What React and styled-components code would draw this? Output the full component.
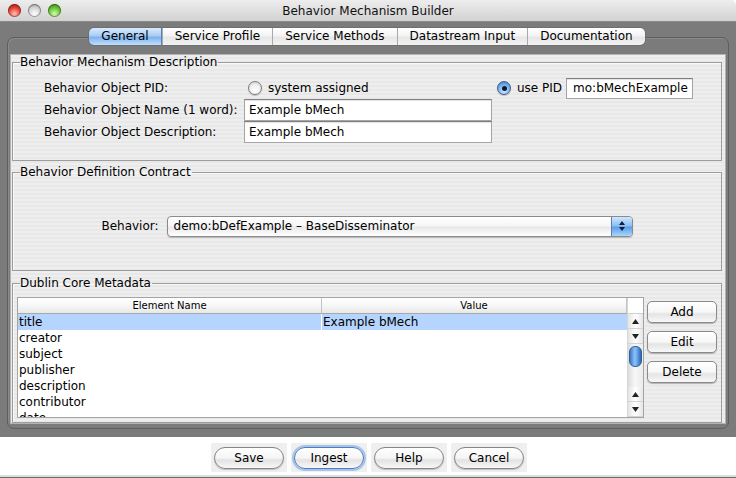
import React from 'react';
import styled, { createGlobalStyle, css } from 'styled-components';

const GlobalStyle = createGlobalStyle`
  html, body { margin: 0; padding: 0; background: #fff; }
  body {
    font-family: "DejaVu Sans", "Liberation Sans", sans-serif;
    font-size: 12px;
    color: #000;
  }
  * { box-sizing: border-box; }
`;

const Window = styled.div`
  width: 736px;
  height: 478px;
  display: flex;
  flex-direction: column;
  overflow: hidden;
`;

const TitleBar = styled.div`
  height: 22px;
  flex: none;
  display: grid;
  grid-template-columns: 1fr auto 1fr;
  align-items: center;
  background: linear-gradient(#ededed, #d2d2d2);
  border-bottom: 1px solid #8a8a8a;
  border-top-right-radius: 5px;
`;

const Lights = styled.div`
  display: flex;
  gap: 7px;
  padding-left: 8px;
  margin-top: -1px;
`;

const lightColors = {
  red: ['#ffc2b8', '#e3392c', '#8f1a10'],
  grey: ['#ffffff', '#d0d0d0', '#8e8e8e'],
  green: ['#d8fbb0', '#5fbe2f', '#2f7214'],
};

const Light = styled.span`
  width: 13px;
  height: 13px;
  border-radius: 50%;
  background: ${p => {
    const [a, b, c] = lightColors[p.$color];
    return `radial-gradient(circle at 50% 75%, ${a} 0%, ${b} 55%, ${c} 100%)`;
  }};
  box-shadow: inset 0 0 0 1px rgba(0, 0, 0, 0.35);
`;

const Title = styled.div`
  font-size: 12px;
  color: #111;
`;

const Body = styled.div`
  height: 415px;
  flex: none;
  background: #7b7b7b;
  padding: 5px 7px 8px 7px;
  display: flex;
  flex-direction: column;
`;

const TabStrip = styled.div`
  align-self: center;
  display: flex;
  height: 19px;
  border: 1px solid #6f6f6f;
  border-radius: 6px;
  overflow: hidden;
  position: relative;
  z-index: 1;
  margin-left: -2px;
`;

const Tab = styled.div`
  padding: 0 12px;
  line-height: 17px;
  font-size: 12px;
  white-space: nowrap;
  border-left: 1px solid #a9a9a9;
  background: linear-gradient(#ffffff 0%, #f4f4f4 45%, #e6e6e6 55%, #f3f3f3 100%);
  &:first-child { border-left: none; }
  ${p => p.$active && css`
    background: linear-gradient(#d9ebfd 0%, #a8cdf5 45%, #7fb2ee 55%, #bfe0fd 100%);
    border-right: 1px solid #5b7fb3;
  `}
`;

const Pane = styled.div`
  flex: 1;
  margin-top: -9px;
  border: 1px solid #5e5e5e;
  border-radius: 7px;
  box-shadow: inset 1px 1px 0 #8a8a8a;
  padding: 16px 2px 4px 2px;
  display: flex;
`;

const Panel = styled.div`
  flex: 1;
  border: 1px solid #b3b3b3;
  background: repeating-linear-gradient(#eeeeee 0 2px, #e8e8e8 2px 4px);
  padding: 0 3px 0 1px;
  display: flex;
  flex-direction: column;
  gap: 4px;
`;

const Group = styled.fieldset`
  margin: 0;
  padding: 0;
  min-width: 0;
  border: 1px solid #9c9c9c;
  box-shadow: inset 1px 1px 0 #fafafa;
  height: ${p => (p.$height ? `${p.$height}px` : 'auto')};
  flex: ${p => (p.$height ? 'none' : '1')};
  margin-top: ${p => p.$gap || 0}px;
`;

const Legend = styled.legend`
  padding: 0 1px 0 0;
  margin-left: 7px;
  font-size: 12px;
  line-height: 14px;
`;

const DescGrid = styled.div`
  display: grid;
  grid-template-columns: 200px 1fr;
  grid-auto-rows: 22px;
  align-items: center;
  padding: 8px 0 0 31px;
`;

const Label = styled.div`
  white-space: nowrap;
`;

const PidRow = styled.div`
  display: flex;
  align-items: center;
  padding-left: 4px;
`;

const RadioOption = styled.label`
  display: flex;
  align-items: center;
  gap: 6px;
  width: ${p => (p.$width ? `${p.$width}px` : 'auto')};
  white-space: nowrap;
`;

const Radio = styled.span`
  width: 14px;
  height: 14px;
  border-radius: 50%;
  flex: none;
  border: 1px solid #7d7d7d;
  background: radial-gradient(circle at 50% 70%, #ffffff 0%, #f0f0f0 50%, #c9c9c9 100%);
  box-shadow: 0 1px 1px rgba(0, 0, 0, 0.2);
  display: flex;
  align-items: center;
  justify-content: center;
  ${p => p.$checked && css`
    border-color: #3f5f8f;
    background: radial-gradient(circle at 50% 75%, #d4ecff 0%, #7db6ef 50%, #3a75c4 100%);
    &::after {
      content: '';
      width: 5px;
      height: 5px;
      border-radius: 50%;
      background: #0c1b33;
    }
  `}
`;

const Field = styled.div`
  height: ${p => p.$h || 22}px;
  width: ${p => p.$w}px;
  margin-left: ${p => p.$ml || 0}px;
  border: 1px solid #a5a5a5;
  border-top-color: #7f7f7f;
  background: #fff;
  box-shadow: inset 0 1px 1px rgba(0, 0, 0, 0.12);
  display: flex;
  align-items: center;
  padding: 0 3px 0 ${p => p.$pl || 4}px;
  overflow: hidden;
  white-space: nowrap;
`;

const ContractRow = styled.div`
  height: 91px;
  display: flex;
  align-items: center;
  justify-content: center;
  gap: 8px;
  padding-top: 3px;
`;

const Select = styled.div`
  width: 466px;
  height: 21px;
  border: 1px solid #8b8b8b;
  border-radius: 4px;
  background: linear-gradient(#ffffff 0%, #f6f6f6 45%, #e9e9e9 55%, #ffffff 100%);
  box-shadow: 0 1px 1px rgba(0, 0, 0, 0.2);
  display: flex;
  align-items: center;
  overflow: hidden;
`;

const SelectText = styled.div`
  flex: 1;
  padding-left: 6px;
`;

const Stepper = styled.div`
  width: 21px;
  align-self: stretch;
  border-left: 1px solid #5a7fb3;
  background: linear-gradient(#cfe6fd 0%, #8ec0f3 45%, #5f9fe9 55%, #a9d6fd 100%);
  display: flex;
  flex-direction: column;
  align-items: center;
  justify-content: center;
  gap: 2px;
`;

const MetaRow = styled.div`
  display: flex;
  padding: 7px 4px 0 4px;
  gap: 3px;
`;

const Table = styled.div`
  width: 627px;
  height: 121px;
  border: 1px solid #a4a4a4;
  background: #fff;
  display: flex;
  overflow: hidden;
`;

const TableMain = styled.div`
  flex: 1;
  overflow: hidden;
`;

const HeaderRow = styled.div`
  display: grid;
  grid-template-columns: 304px 1fr;
  height: 16px;
  border-bottom: 1px solid #a9a9a9;
  background: linear-gradient(#ffffff 0%, #f7f7f7 50%, #e8e8e8 100%);
`;

const HeaderCell = styled.div`
  font-size: 10px;
  line-height: 15px;
  text-align: center;
  border-right: 1px solid #c3c3c3;
`;

const Row = styled.div`
  display: grid;
  grid-template-columns: 304px 1fr;
  height: 16px;
`;

const Cell = styled.div`
  line-height: 16px;
  padding-left: 1px;
  white-space: nowrap;
  background: ${p => (p.$selected ? '#b5d5ff' : '#fff')};
  &:first-child { border-right: 1px solid #fff; }
`;

const ScrollColumn = styled.div`
  width: 16px;
  display: flex;
  flex-direction: column;
  border-left: 1px solid #d6d6d6;
`;

const Corner = styled.div`
  height: 16px;
  border-bottom: 1px solid #d0d0d0;
  background: #fff;
`;

const ArrowBox = styled.div`
  height: 15px;
  display: flex;
  align-items: center;
  justify-content: center;
  background: linear-gradient(90deg, #e4e4e4, #ffffff 50%, #e6e6e6);
  border-bottom: 1px solid #d3d3d3;
`;

const Track = styled.div`
  flex: 1;
  background: linear-gradient(90deg, #dcdcdc, #f7f7f7 45%, #ececec);
  padding: 2px 1px 0 1px;
`;

const Thumb = styled.div`
  height: 21px;
  border-radius: 6px;
  border: 1px solid #345d99;
  background: linear-gradient(90deg, #3d79cc 0%, #8fc3f6 45%, #5d9ce8 70%, #2f64b4 100%);
`;

const SideButtons = styled.div`
  display: flex;
  flex-direction: column;
  gap: 8px;
  padding-top: 4px;
`;

const SquareButton = styled.div`
  width: 70px;
  height: 22px;
  border: 1px solid #8a8a8a;
  border-radius: 5px;
  background: linear-gradient(#ffffff 0%, #f7f7f7 50%, #e4e4e4 60%, #f8f8f8 100%);
  box-shadow: 0 1px 1px rgba(0, 0, 0, 0.25);
  display: flex;
  align-items: center;
  justify-content: center;
`;

const Footer = styled.div`
  flex: 1;
  background: #fff;
  display: flex;
  justify-content: center;
  gap: 4px;
  padding-top: 6px;
  box-shadow: inset 0 -1px 0 #6b6b6b, inset 0 -3px 0 #dcdcdc;
  padding-left: 2px;
`;

const ButtonSlot = styled.div`
  width: 76px;
  height: 29px;
  background: #efefef;
  display: flex;
  align-items: center;
  justify-content: center;
`;

const PillButton = styled.div`
  width: 70px;
  height: 22px;
  border: 1px solid #858585;
  border-radius: 11px;
  background: linear-gradient(#ffffff 0%, #f5f5f5 50%, #e2e2e2 60%, #f8f8f8 100%);
  box-shadow: 0 1px 1px rgba(0, 0, 0, 0.2);
  display: flex;
  align-items: center;
  justify-content: center;
  ${p => p.$focused && css`
    border-color: #4a7cc0;
    box-shadow: 0 0 0 2px rgba(108, 160, 226, 0.55);
  `}
`;

function Triangle({ up, color = '#222', w = 7, h = 5 }) {
  return (
    <svg width={w} height={h} viewBox={`0 0 ${w} ${h}`}>
      <polygon
        points={up ? `0,${h} ${w / 2},0 ${w},${h}` : `0,0 ${w},0 ${w / 2},${h}`}
        fill={color}
      />
    </svg>
  );
}

const tabs = ['General', 'Service Profile', 'Service Methods', 'Datastream Input', 'Documentation'];

const metadata = [
  { name: 'title', value: 'Example bMech' },
  { name: 'creator', value: '' },
  { name: 'subject', value: '' },
  { name: 'publisher', value: '' },
  { name: 'description', value: '' },
  { name: 'contributor', value: '' },
  { name: 'date', value: '' },
];

export default function App() {
  return (
    <Window>
      <GlobalStyle />
      <TitleBar>
        <Lights>
          <Light $color="red" />
          <Light $color="grey" />
          <Light $color="green" />
        </Lights>
        <Title>Behavior Mechanism Builder</Title>
        <div />
      </TitleBar>

      <Body>
        <TabStrip>
          {tabs.map((t, i) => (
            <Tab key={t} $active={i === 0}>{t}</Tab>
          ))}
        </TabStrip>
        <Pane>
          <Panel>
            <Group $height={106}>
              <Legend>Behavior Mechanism Description</Legend>
              <DescGrid>
                <Label>Behavior Object PID:</Label>
                <PidRow>
                  <RadioOption $width={249}>
                    <Radio />
                    system assigned
                  </RadioOption>
                  <RadioOption>
                    <Radio $checked />
                    use PID
                  </RadioOption>
                  {/* field is scrolled: only the tail of the PID shows */}
                  <Field $w={127} $h={21} $ml={4} $pl={6}>mo:bMechExample</Field>
                </PidRow>
                <Label>Behavior Object Name (1 word):</Label>
                <Field $w={248}>Example bMech</Field>
                <Label>Behavior Object Description:</Label>
                <Field $w={248}>Example bMech</Field>
              </DescGrid>
            </Group>

            <Group $height={106}>
              <Legend>Behavior Definition Contract</Legend>
              <ContractRow>
                <Label>Behavior:</Label>
                <Select>
                  <SelectText>demo:bDefExample – BaseDisseminator</SelectText>
                  <Stepper>
                    <Triangle up color="#0d1f3c" w={6} h={4} />
                    <Triangle color="#0d1f3c" w={6} h={4} />
                  </Stepper>
                </Select>
              </ContractRow>
            </Group>

            <Group $gap={1}>
              <Legend>Dublin Core Metadata</Legend>
              <MetaRow>
                <Table>
                  <TableMain>
                    <HeaderRow>
                      <HeaderCell>Element Name</HeaderCell>
                      <HeaderCell>Value</HeaderCell>
                    </HeaderRow>
                    {metadata.map((m, i) => (
                      <Row key={m.name}>
                        <Cell $selected={i === 0}>{m.name}</Cell>
                        <Cell $selected={i === 0}>{m.value}</Cell>
                      </Row>
                    ))}
                  </TableMain>
                  <ScrollColumn>
                    <Corner />
                    <ArrowBox><Triangle up /></ArrowBox>
                    <ArrowBox><Triangle /></ArrowBox>
                    <Track><Thumb /></Track>
                    <ArrowBox><Triangle up /></ArrowBox>
                    <ArrowBox><Triangle /></ArrowBox>
                  </ScrollColumn>
                </Table>
                <SideButtons>
                  <SquareButton>Add</SquareButton>
                  <SquareButton>Edit</SquareButton>
                  <SquareButton>Delete</SquareButton>
                </SideButtons>
              </MetaRow>
            </Group>
          </Panel>
        </Pane>
      </Body>

      <Footer>
        <ButtonSlot><PillButton>Save</PillButton></ButtonSlot>
        <ButtonSlot><PillButton $focused>Ingest</PillButton></ButtonSlot>
        <ButtonSlot><PillButton>Help</PillButton></ButtonSlot>
        <ButtonSlot><PillButton>Cancel</PillButton></ButtonSlot>
      </Footer>
    </Window>
  );
}
